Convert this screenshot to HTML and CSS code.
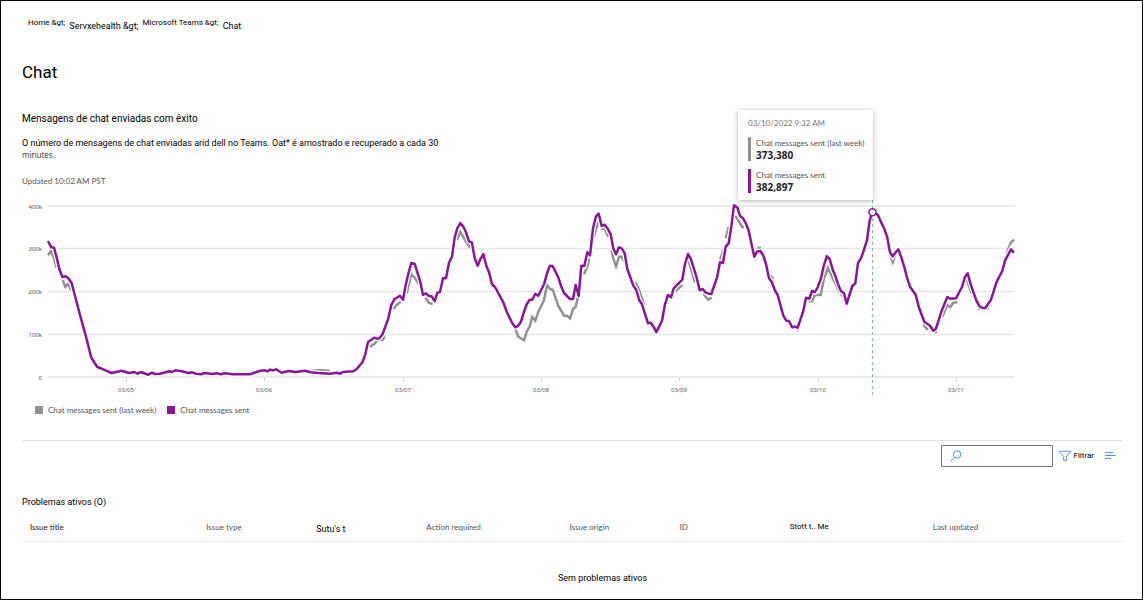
FILE: index.html
```html
<!DOCTYPE html>
<html lang="pt">
<head>
<meta charset="utf-8">
<title>Chat</title>
<link rel="stylesheet" href="styles.css">
</head>
<body>
<main class="page">
  <nav class="crumbs" aria-label="Breadcrumb">
    <a class="crumb crumb-small" href="#">Home &amp;gt;</a>
    <a class="crumb" href="#">Servxehealth &amp;gt;</a>
    <a class="crumb crumb-small" href="#">Microsoft Teams &amp;gt;</a>
    <span class="crumb">Chat</span>
  </nav>
  <h1 class="title">Chat</h1>

  <section class="metric">
    <h2 class="heading">Mensagens de chat enviadas com êxito</h2>
    <p class="description">O número de mensagens de chat enviadas arid dell no Teams. Oat* é amostrado e recuperado a cada 30 <span class="description-end">minutes.</span></p>
    <p class="updated">Updated 10:02 AM PST</p>

    <div class="chart">
      <svg class="plot" viewBox="22 195 1101 206" role="img" aria-label="Chat messages sent">
        <path class="grid" d="M48 206H1014M48 248.500H1014M48 291.500H1014M48 334.500H1014M48 377H1014"/>
        <path class="ticks" d="M126.500 378v3M264.500 378v3M403.500 378v3M541.500 378v3M679.500 378v3M818.500 378v3M956.500 378v3"/>
        <g class="axis axis-y">
          <text x="42" y="209">400k</text><text x="42" y="251">300k</text><text x="42" y="294">200k</text><text x="42" y="337">100k</text><text x="42" y="380">0</text>
        </g>
        <g class="axis axis-x">
          <text x="126" y="392">03/05</text><text x="264" y="392">03/06</text><text x="403" y="392">03/07</text><text x="541" y="392">03/08</text><text x="679" y="392">03/09</text><text x="818" y="392">03/10</text><text x="956" y="392">03/11</text>
        </g>
        <path class="last-week" d="M48 255.300L51 251L54 258.300L56.700 267.700M62.700 280.300L65.300 286.700L68.300 283.700L71 290M310 371L320 370L330 371M369.300 347L374.300 344L377.300 340.300L382.700 339.700L384.700 336.300M393.300 309L396.700 305L400.700 301.700M406.700 293.300L411.300 274.300L414.700 277.700L419 284M425.300 297.700L429 303L432.700 304M456.700 240L460.300 231.700L464 238.300L470 247.700M481.300 255L483.300 250.500L485.300 255M515.300 329L518.300 336.700L524 340.300L526.700 331.700L529.700 326.300L532.300 317L535.300 320.700L538.300 311.700L541.300 305.700L544 300.300L547 285L550 289L552.700 289.700L558.300 305.700L564 315.700L567 315.700L570 318.300L573 309L575.700 306.700L577.700 297.700M584 274.300L587.300 266.700L590 255M593.300 238.300L598 222.300M601 229L604.300 227.700L608.300 236.700M611.700 250L613.300 258.300L616 266.300L619 256.700L621.700 256.700L624.300 261.700M635 282.300L638.300 287.700L644 304.300M675 291.700L682.300 285M687 262L689 262L695 282.300M703.300 293.700L708 299.700L711.700 297.700M720 260L724 248.300M725.700 238.300L728.700 226.700M735.300 215.700L740 223.300L743.300 228.300M753 259.700H756M757.700 248.300L761 247.700M770 275L773.300 279.300M796.700 330H799M808.700 301.700L812.300 301L815 294.700L820.700 295L824 278.300L828 267.700L832.700 278.300L838.300 290L843.300 296.700M890.700 256.700L892.700 262.300L895 255.700M923.300 324.300L927.700 330M934.300 332.300L937.300 331.700M942.300 316.700L947.300 305L950.300 307L953.300 302.700L957.300 302.300M966.700 280L971.700 293.300M978.300 309L989 308.300M1006.700 253.300L1011 242.300L1014.300 239.700"/>
        <g class="this-week">
          <path id="sent" d="M48 241L51.300 247.300L54 247.700L56.700 257.700L59.300 269L62.300 277L65.700 276.300L68.700 278.700L71.700 283.300L80 315L86 336.700L91.300 357.700L97.300 367L103.300 369.300L111.700 373L121.700 370.700L129 373L134.300 372L137.700 373.700L140.700 372L148.300 374.700L152 372.700L155 374L160 373.700L169.300 371.300L172 372L175.300 370.300L181.700 371.300L188.300 373L192.300 372.300L195.700 373.700L201.300 374.300L204 373L212.700 374L216.700 373.300L220.700 374.300L225 373.300L232.700 374.300L250 374.300L259.300 371L264.300 370.300L267.300 371.300L270 369.700L273.300 370.300L276 369.300L281.700 372.700L288.300 371L295.700 372L305 370.700L310.700 372.300L318.300 373L330 373.700L336.700 372.700L340 373.700L342.700 372L353.300 371.300L356.700 369L362.700 361.700L365.300 354.300L368 342L374.300 337.700L376.700 338.700L379.300 338.300L382.700 334L388.300 318.300L391.300 305L394.300 299.300L400 295.700L403 299.700L405.700 285L408.700 272.300L411.300 263L414.700 264L420.300 281.700L423 295L425.700 293.300L429 296L431.700 296.300L434.700 301.300L437.300 292.700L440 292L443 278.300L446 278.300L449 262.700L452 256.700L454.700 237.300L457.300 228.300L460.300 223L463.300 226.700L466 232.300L469 241.300L472 242.700L474.700 258.300L477.700 265.700L480.300 259.300L483.300 254L486.300 265.700L489.300 273.300L492 284.300L495 287L503.300 302.300L506.700 311.700L512.300 323.300L515.300 327.300L518 326L521 321.700L524 311.700L526.700 304.300L529.700 299.700L532.300 299.700L535.300 293.700L538.300 295.700L544 284.300L547 273.300L550 265.700L552.700 266.300L558.300 277.300L561 285.700L564 293L570 299L573 299L575.700 285L578.700 296L581.300 265.700L584.300 266L587.300 252.300L590 255.300L593 228.300L596 216.300L598.700 213.700L601.700 226L604.700 224.700L607.700 228.700L610.700 234.300L613.300 248.300L616 254.300L619 247.300L621.700 248.300L624.700 253.300L627.300 269L633.300 285.700L636.300 290L639.300 300.300L642 304.300L648 323.300L650.700 322.700L653.700 327L656.300 332.300L662 320.700L665 304.300L668 295L671 297.300L673.700 288.300L682.300 279.700L685 264L688 254L691 259.300L696.700 277.700L699.700 290.300L702.700 289L705.300 292.300L708.700 293.700L711.300 294L717 277.700L720 262.300L723 263L725.700 246.700L728.700 243.300L731.300 226.700L734 205.300L737.300 207.300L740 216L743 218.300L746 223.700L748.700 230.700L751.700 245L754.300 256.700L757 251.700L760.300 251L763.300 255.700L766 264L769 278.300L771.700 281.700L774.700 290L777.700 295L783.300 315.700L786.300 320.700L789 321L792 327.300L795 326.700L797.700 327.700L803.300 311L806 297.700L809.300 298.700L812 291L815 292L817.700 287.300L821 278.300L823.700 266L826.700 256.300L829.700 259L832.700 269.700L835.300 275.700L838 284.300L841 291.300L844 293.300L846.700 303.700L852.300 286L855.300 283.300L858 263L861.300 257.700L867 240.300L869.700 220.300L872.300 212L875.700 213L878.300 215.700L881.300 222.700L884.300 228.700L887.300 237.700L890 252.300L892.700 256.300L895.700 252.300L898.300 249.300L901.300 257.300L904.300 267L907 277.700L910 286.700L915.700 294.700L918.700 306.700L924.300 321.700L930 325.700L933.300 330.700L936 328.700L941.700 310.700L947.300 297L950.300 298.700L956 298.300L962 287L965 276.700L967.700 273.300L970.700 284.300L976.300 300.300L979.300 306L982.300 308L985.300 308L991 299.700L996.700 281.700L1002.300 271L1005 260.700L1011 249.300L1014 252.700"/>
        </g>
        <use class="sent-line" href="#sent"/>
        <path class="cursor" d="M872.500 200V398"/>
        <circle class="marker" cx="872.500" cy="212.300" r="3.500"/>
      </svg>

      <div class="tooltip">
        <div class="tooltip-time">03/10/2022 9:32 AM</div>
        <div class="tooltip-item">
          <div>Chat messages sent (last week)</div>
          <strong class="tooltip-value">373,380</strong>
        </div>
        <div class="tooltip-item tooltip-sent">
          <div>Chat messages sent</div>
          <strong class="tooltip-value">382,897</strong>
        </div>
      </div>
    </div>

    <ul class="legend">
      <li class="legend-item"><span class="swatch"></span>Chat messages sent (last week)</li>
      <li class="legend-item"><span class="swatch swatch-sent"></span>Chat messages sent</li>
    </ul>
  </section>

  <div class="toolbar">
    <label class="search">
      <svg class="search-icon" viewBox="0 0 12 12" aria-hidden="true"><circle cx="7.200" cy="4.500" r="3.700"/><path d="M4.600 7.200L.5 11.300"/></svg>
      <input class="search-input" type="search" aria-label="Search">
    </label>
    <button class="tool" type="button">
      <svg class="filter-icon" viewBox="0 0 12 12" aria-hidden="true"><path d="M.8 1.200H11.200V2.200L7.300 6.300V10.600H4.700V6.300L.8 2.200Z"/></svg>
      Filtrar
    </button>
    <button class="tool" type="button" aria-label="Group">
      <svg class="lines-icon" viewBox="0 0 12 12" aria-hidden="true"><path d="M1 2.500H9M1 5.500H11.500M1 8.500H7"/></svg>
    </button>
  </div>

  <section>
    <h2 class="heading heading-small">Problemas ativos (O)</h2>
    <table class="issues">
      <colgroup>
        <col class="col-title"><col class="col-short"><col class="col-short"><col class="col-wide"><col class="col-short"><col class="col-short"><col class="col-wide"><col>
      </colgroup>
      <thead>
        <tr>
          <th class="main-column">Issue title</th>
          <th>Issue type</th>
          <th class="dark status">Sutu's t</th>
          <th>Action required</th>
          <th>Issue origin</th>
          <th>ID</th>
          <th class="dark">Stott t.. Me</th>
          <th>Last updated</th>
        </tr>
      </thead>
      <tbody>
        <tr><td class="empty" colspan="8">Sem problemas ativos</td></tr>
      </tbody>
    </table>
  </section>
</main>
</body>
</html>
```
FILE: styles.css
```css
* { box-sizing: border-box; }

body {
  margin: 0;
  background: #fff;
  color: #000;
  font-family: Roboto, "Liberation Sans", sans-serif;
  font-size: 9px;
  line-height: 12px;
}

.page {
  min-height: 100vh;
  padding: 16px 19px 0 21px;
  border: 1px solid #000;
}

.crumbs {
  display: flex;
  gap: 4px;
  padding-left: 6px;
}

.crumb {
  padding-top: 3px;
  color: #000;
  text-decoration: none;
}

.crumb-small {
  padding-top: 0;
  font-size: 8px;
}

.title {
  margin: 29px 0 0;
  font-size: 17px;
  font-weight: 400;
  line-height: 22px;
}

.metric {
  padding-bottom: 24px;
  border-bottom: 1px solid #e1e1e1;
  margin-top: 30px;
}

.heading {
  margin: 0;
  font-size: 10px;
  font-weight: 400;
  line-height: 12px;
}

.heading-small { font-size: 9px; }

.description {
  max-width: 430px;
  margin: 12px 0 0;
}

.description-end {
  display: block;
  color: #444;
  font: 8px/11px "Noto Sans", sans-serif;
}

.updated {
  margin: 15px 0 8px;
  color: #555;
  font: 8px/12px Lato, sans-serif;
}

.chart { position: relative; }

.plot {
  display: block;
  width: 100%;
}

.plot path { fill: none; }
.plot .grid { stroke: #e6e6e6; stroke-width: 1.500; }
.plot .ticks { stroke: #ccc; }

.axis {
  fill: #555;
  font: 6px "Noto Sans", sans-serif;
}

.axis-y { text-anchor: end; }
.axis-x { text-anchor: middle; }

.plot .last-week { stroke: #919191; stroke-width: 2.500; }
.this-week { stroke: #fff; stroke-width: 5; }
.sent-line { stroke: #881798; stroke-width: 2.500; stroke-linejoin: round; }
.plot .cursor { stroke: #7fb2dc; stroke-dasharray: 3 3; }
.marker { fill: #fff; stroke: #881798; stroke-width: 1.500; }

.tooltip {
  position: absolute;
  right: 22.700%;
  bottom: 97.500%;
  width: 135px;
  padding: 7px 10px;
  background: #fff;
  box-shadow: 0 1px 5px rgba(0, 0, 0, .3);
  color: #555;
  font: 8px/12px Lato, sans-serif;
}

.tooltip-time { color: #777; }

.tooltip-item {
  margin-top: 8px;
  padding-left: 5px;
  border-left: 3px solid #919191;
  white-space: nowrap;
}

.tooltip-sent { border-color: #881798; }

.tooltip-value {
  display: block;
  color: #222;
  font: bold 10px/12px "Noto Sans", sans-serif;
}

.legend {
  display: flex;
  gap: 11px;
  margin: 3px 0 0;
  padding: 0 0 0 13px;
  color: #555;
  font: 8px/12px Lato, sans-serif;
  list-style: none;
}

.legend-item {
  display: flex;
  align-items: center;
  gap: 5px;
}

.swatch {
  width: 8px;
  height: 8px;
  background: #919191;
}

.swatch-sent { background: #881798; }

.toolbar {
  display: flex;
  align-items: center;
  justify-content: flex-end;
  gap: 6px;
  padding: 4px 7px 29px 0;
}

.search {
  display: flex;
  align-items: center;
  width: 112px;
  height: 22px;
  padding-left: 8px;
  border: 1px solid #767676;
  border-radius: 1px;
}

.search-input {
  flex: 1;
  min-width: 0;
  border: 0;
  outline: 0;
  font: inherit;
}

.tool {
  display: flex;
  align-items: center;
  gap: 2px;
  padding: 0;
  margin-right: 4px;
  border: 0;
  background: none;
  color: #000;
  font: 8px/12px Roboto, sans-serif;
}

.tool:last-child { margin-right: 0; }

.search-icon,
.filter-icon,
.lines-icon {
  width: 12px;
  height: 12px;
  fill: none;
  stroke: #4a94dc;
}

.issues {
  width: 100%;
  margin-top: 6px;
  border-collapse: collapse;
  table-layout: fixed;
}

.issues th {
  height: 27px;
  padding: 0 8px;
  border-bottom: 1px solid #eaeaea;
  color: #555;
  font: 8px/12px Lato, sans-serif;
  text-align: left;
}

.issues .main-column { color: #222; }
.issues .dark { color: #000; font: 8px/12px Roboto, sans-serif; }
.issues .status { padding-top: 3px; font-size: 9px; }

.col-title { width: 16%; }
.col-short { width: 10%; }
.col-wide { width: 13%; }

.empty {
  padding: 30px 0 0 60px;
  text-align: center;
}
```
